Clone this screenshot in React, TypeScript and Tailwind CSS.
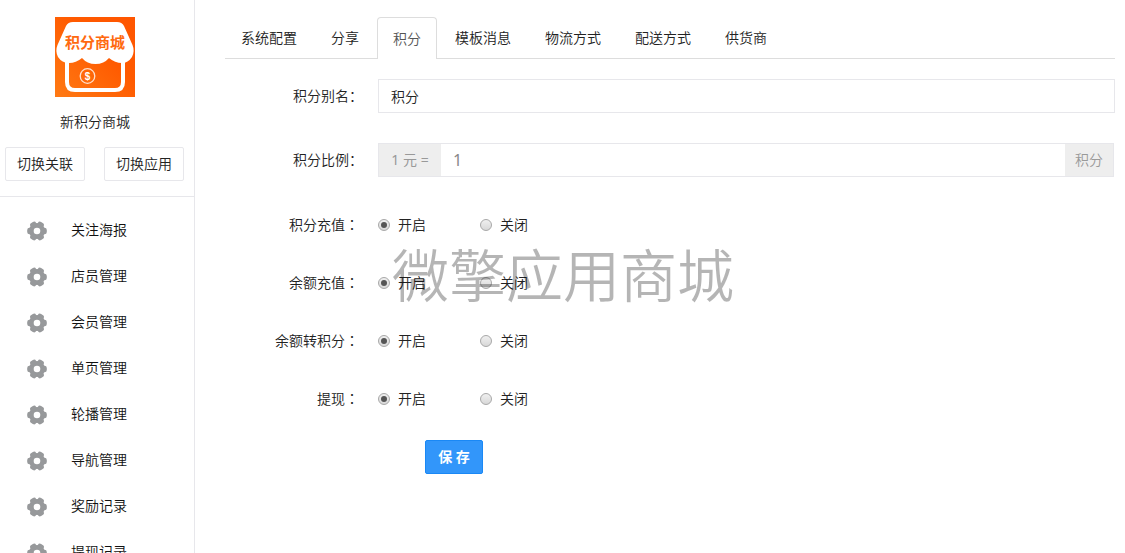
import { useState } from 'react'

const tabs = ['系统配置', '分享', '积分', '模板消息', '物流方式', '配送方式', '供货商']

const menus = [
  '关注海报',
  '店员管理',
  '会员管理',
  '单页管理',
  '轮播管理',
  '导航管理',
  '奖励记录',
  '提现记录',
]

const switches = [
  { name: 'recharge', label: '积分充值' },
  { name: 'balance', label: '余额充值' },
  { name: 'transfer', label: '余额转积分' },
  { name: 'withdraw', label: '提现' },
]

function Logo() {
  return (
    <svg width="80" height="80" viewBox="0 0 80 80" aria-label="积分商城" role="img">
      <defs>
        <linearGradient id="logo-bg" x1="0" y1="1" x2="1" y2="0">
          <stop offset="0" stopColor="#ff7a14" />
          <stop offset="0.6" stopColor="#ff5a00" />
          <stop offset="1" stopColor="#ff5500" />
        </linearGradient>
      </defs>
      <rect width="80" height="80" fill="url(#logo-bg)" />
      <path
        d="M12 40V65Q12 73 20 73H60Q68 73 68 65V40"
        fill="none"
        stroke="#fff"
        strokeWidth="4"
      />
      <path
        d="M18 5H62Q67 5 69 9L77.500 28Q80 34 77 40Q73 46 67 46Q60 46 54 41Q49 47 40.500 47Q32 47 27 41Q21 46 14 46Q7 46 3 40Q0 34 2.500 28L11 9Q13 5 18 5Z"
        fill="#fff"
      />
      <text
        x="40"
        y="31"
        textAnchor="middle"
        fill="#ff6a10"
        fontSize="15"
        fontWeight="700"
        fontFamily="'Noto Sans CJK SC', sans-serif"
      >
        积分商城
      </text>
      <circle cx="32.500" cy="59" r="7.300" fill="none" stroke="#ffe0cc" strokeWidth="1.300" />
      <text
        x="32.500"
        y="62.500"
        textAnchor="middle"
        fill="#fff"
        fontSize="10"
        fontWeight="700"
        fontFamily="'Liberation Sans', sans-serif"
      >
        $
      </text>
    </svg>
  )
}

function GearIcon() {
  return (
    <svg width="20" height="22" viewBox="0 0 20 22" fill="#97999b" aria-hidden="true">
      <circle cx="10" cy="12" r="8" />
      <rect x="0.200" y="8.700" width="19.600" height="6.600" rx="2.400" />
      <rect
        x="0.200"
        y="8.700"
        width="19.600"
        height="6.600"
        rx="2.400"
        transform="rotate(60 10 12)"
      />
      <rect
        x="0.200"
        y="8.700"
        width="19.600"
        height="6.600"
        rx="2.400"
        transform="rotate(120 10 12)"
      />
      <circle cx="10" cy="12" r="3.300" fill="#fff" />
    </svg>
  )
}

function Sidebar() {
  return (
    <aside className="w-[195px] shrink-0 border-r border-[#e7e7eb]">
      <div className="border-b border-[#e7e7eb] pt-[17px] pb-[15px]">
        <div className="flex flex-col items-center pr-1">
          <Logo />
          <p className="my-[15px] leading-5">新积分商城</p>
        </div>
        <div className="flex w-full justify-between pr-[10px] pl-[5px]">
          <button type="button" className="h-[34px] w-20 rounded-xs border border-[#e7e7eb]">
            切换关联
          </button>
          <button type="button" className="h-[34px] w-20 rounded-xs border border-[#e7e7eb]">
            切换应用
          </button>
        </div>
      </div>
      <nav className="pt-[10px]">
        {menus.map((menu) => (
          <a key={menu} href="#" className="flex h-[46px] items-center gap-6 pl-[27px] text-[#111]">
            <GearIcon />
            <span>{menu}</span>
          </a>
        ))}
      </nav>
    </aside>
  )
}

function SwitchRow({ name, label }: { name: string; label: string }) {
  const [enabled, setEnabled] = useState(true)
  const radio =
    'mr-2 grid size-3 appearance-none place-items-center rounded-full border border-[#a8a8a8] bg-linear-to-b from-[#f0f0f0] to-[#d8d8d8] checked:before:size-[6px] checked:before:rounded-full checked:before:bg-[#555]'

  return (
    <div role="radiogroup" aria-label={label} className="flex h-[58px] items-center">
      <span className="w-[134px] shrink-0 text-right">
        {label}
        <span className="font-['Noto_Sans_CJK_TC',sans-serif] leading-none">：</span>
      </span>
      <label className="ml-[19px] flex w-[102px] items-center">
        <input
          type="radio"
          name={name}
          className={radio}
          checked={enabled}
          onChange={() => setEnabled(true)}
        />
        开启
      </label>
      <label className="flex items-center">
        <input
          type="radio"
          name={name}
          className={radio}
          checked={!enabled}
          onChange={() => setEnabled(false)}
        />
        关闭
      </label>
    </div>
  )
}

export default function App() {
  const [active, setActive] = useState('积分')

  return (
    <div className="flex h-screen overflow-hidden bg-white font-['Noto_Sans','Noto_Sans_CJK_SC',sans-serif] text-sm font-[350] text-[#222]">
      <Sidebar />
      <main className="relative min-w-0 flex-1 pt-[17px] pr-[10px] pl-[30px]">
        <div role="tablist" className="flex gap-[2px] border-b border-[#ddd]">
          {tabs.map((tab) => (
            <button
              key={tab}
              type="button"
              role="tab"
              aria-selected={tab === active}
              onClick={() => setActive(tab)}
              className={
                tab === active
                  ? '-mb-px h-[42px] rounded-t border border-b-0 border-[#ddd] bg-white px-[15px] text-[#555]'
                  : 'h-[41px] border border-transparent px-[15px]'
              }
            >
              {tab}
            </button>
          ))}
        </div>
        <form onSubmit={(e) => e.preventDefault()}>
          <div className="mt-5 flex items-center">
            <label htmlFor="alias" className="w-[138px] shrink-0 text-right">
              积分别名：
            </label>
            <input
              id="alias"
              defaultValue="积分"
              className="ml-[15px] h-[34px] min-w-0 flex-1 border border-[#e7e7eb] px-3"
            />
          </div>
          <div className="mt-[30px] mb-[19px] flex items-center">
            <label htmlFor="ratio" className="w-[138px] shrink-0 text-right">
              积分比例：
            </label>
            <div className="mr-px ml-[15px] flex h-[34px] min-w-0 flex-1 border border-[#e7e7eb] text-[#999]">
              <span className="flex w-[62px] items-center justify-center bg-[#eee] font-normal">
                1 元 =
              </span>
              <input
                id="ratio"
                defaultValue="1"
                className="min-w-0 flex-1 px-3 text-base font-normal text-[#888]"
              />
              <span className="flex w-12 items-center justify-center bg-[#eee]">积分</span>
            </div>
          </div>
          {switches.map((item) => (
            <SwitchRow key={item.name} {...item} />
          ))}
          <button
            type="submit"
            className="mt-3 ml-[200px] h-[34px] w-[58px] rounded-xs border border-[#1a88f5] bg-[#3296fa] font-bold text-white"
          >
            保 存
          </button>
        </form>
        <div className="pointer-events-none absolute top-[232px] left-[197px] font-['Noto_Sans_CJK_SC',sans-serif] text-[57px] leading-20 font-[350] whitespace-nowrap text-black/29">
          微擎应用商城
        </div>
      </main>
    </div>
  )
}
